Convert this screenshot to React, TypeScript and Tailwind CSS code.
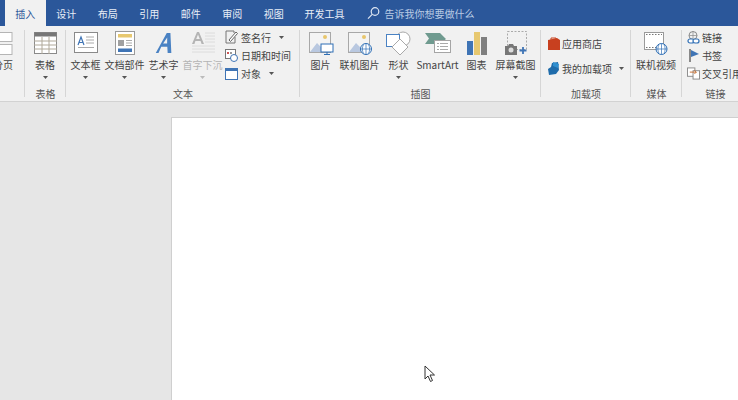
import React from "react";

const Caret = ({ c = "#555" }: { c?: string }) => (
  <svg width="5" height="3" viewBox="0 0 5 3" className="block"><path d="M0 0h5L2.5 3z" fill={c} /></svg>
);

const Big = ({ label, caret, children, dim, w = "w-[39px]" }: { label: string; caret?: boolean; children: React.ReactNode; dim?: boolean; w?: string }) => (
  <div className={`${w} shrink-0 flex flex-col items-center`}>
    <div className="h-[26px] flex items-center justify-center">{children}</div>
    <div className={`mt-[2px] h-[14px] leading-[14px] text-[10px] whitespace-nowrap ${dim ? "text-[#b4b4b4]" : "text-[#444]"}`}>{label}</div>
    {caret && <div className="mt-[4px]"><Caret c={dim ? "#bbb" : "#555"} /></div>}
  </div>
);

const Small = ({ label, icon, caret, h = "h-[19px]", gap = "gap-[2px]" }: { label: string; icon: React.ReactNode; caret?: string; h?: string; gap?: string }) => (
  <div className={`${h} flex items-center ${gap} whitespace-nowrap text-[10px] text-[#444]`}>
    <span className="w-[13px] h-[14px] flex items-center justify-center shrink-0">{icon}</span>
    <span>{label}</span>
    {caret && <span className={caret}><Caret /></span>}
  </div>
);

const Group = ({ label, w, children, last, right }: { label: string; w: string; children: React.ReactNode; last?: boolean; right?: boolean }) => (
  <div className={`${w} shrink-0 flex flex-col h-full relative overflow-hidden`}>
    <div className={`h-[57px] flex pt-[4px] ${right ? "justify-end" : ""}`}>{children}</div>
    <div className="mt-[4px] h-[14px] leading-[14px] text-center text-[10px] text-[#555]">{label}</div>
    {!last && <div className="absolute right-0 top-[4px] bottom-[4px] w-px bg-[#d6d6d6]" />}
  </div>
);

const Tab = ({ t, active, w = "w-[41.5px]" }: { t: string; active?: boolean; w?: string }) => (
  <div className={`${w} h-full shrink-0 flex items-center justify-center text-[10px] ${active ? "bg-[#f1f1f1] text-[#2b579a]" : "text-[#e8eef7]"}`}>{t}</div>
);

const Picture = ({ children }: { children?: React.ReactNode }) => (
  <svg width="26" height="25" viewBox="0 0 26 25">
    <rect x="1.5" y="1.5" width="21" height="20" fill="#f4f4f4" stroke="#a8a8a8" />
    <circle cx="17" cy="6" r="2" fill="#e8c66c" />
    <path d="M2 21l7-9 5 5 3-2 5 6z" fill="#b9c8e0" />
    {children}
  </svg>
);

export default function App() {
  return (
    <div className="w-[738px] h-[400px] overflow-hidden relative bg-[#e6e6e6] flex flex-col" style={{ fontFamily: '"Noto Sans CJK SC", "Noto Sans", sans-serif' }}>
      <div className="h-[26px] shrink-0 bg-[#2b579a] flex pl-[5px]">
        <Tab t="插入" active w="w-[40.5px]" /><Tab t="设计" /><Tab t="布局" /><Tab t="引用" /><Tab t="邮件" /><Tab t="审阅" /><Tab t="视图" /><Tab t="开发工具" w="w-[60px]" />
        <div className="ml-[12px] flex items-center gap-[5px]">
          <svg width="13" height="14" viewBox="0 0 13 14" fill="none" stroke="#dfe7f3" strokeWidth="1.2"><circle cx="8" cy="5.5" r="3.8" /><path d="M5.2 8.3L1 12.6" /></svg>
          <span className="text-[10px] text-[#b9cbe4]">告诉我你想要做什么</span>
        </div>
      </div>

      <div className="h-[76px] shrink-0 bg-[#f1f1f1] border-b border-[#d2d2d2] flex">
        <Group label="" w="w-[25px]" right>
          <div className="w-[25px] pr-[12px] flex flex-col items-end shrink-0">
            <svg width="13" height="26" viewBox="0 0 13 26" fill="none" className="shrink-0">
              <rect x="-3" y="2.5" width="15" height="9" fill="#fff" stroke="#b5b5b5" />
              <rect x="-3" y="14.5" width="15" height="10" fill="#fff" stroke="#b5b5b5" />
            </svg>
            <div className="mt-[2px] h-[14px] leading-[14px] text-[10px] text-[#444] whitespace-nowrap">分页</div>
          </div>
        </Group>

        <Group label="表格" w="w-[41px]">
          <Big label="表格" caret w="w-[40px]">
            <svg width="23" height="22" viewBox="0 0 23 22">
              <rect x="0.5" y="0.5" width="22" height="21" fill="#fff" stroke="#8a8a8a" />
              <rect x="0.5" y="0.5" width="22" height="4" fill="#777" />
              <path d="M0 9h23M0 13h23M0 17h23M8 5v17M15 5v17" stroke="#b0a99a" fill="none" />
            </svg>
          </Big>
        </Group>

        <Group label="文本" w="w-[234px]">
          <Big label="文本框" caret>
            <svg width="24" height="22" viewBox="0 0 24 22">
              <rect x="0.5" y="0.5" width="23" height="20" fill="#fff" stroke="#8a8a8a" />
              <path d="M4 13l3-8 3 8M5 10.5h4" stroke="#3f74b5" strokeWidth="1.2" fill="none" />
              <path d="M12 5h8M12 8h8M12 11h8M4 15.5h16" stroke="#aaa" fill="none" />
            </svg>
          </Big>
          <Big label="文档部件" caret>
            <svg width="20" height="24" viewBox="0 0 20 24">
              <rect x="0.5" y="0.5" width="19" height="23" fill="#fff" stroke="#9a9a9a" />
              <rect x="3" y="3" width="14" height="3.5" fill="#e7c870" />
              <rect x="3" y="9" width="6" height="6" fill="#a0a0a0" />
              <path d="M11 9.5h6M11 12h6M11 14.5h6" stroke="#aaa" fill="none" />
              <rect x="3" y="17.5" width="14" height="3.5" fill="#3f74b5" />
            </svg>
          </Big>
          <Big label="艺术字" caret>
            <svg width="20" height="22" viewBox="0 0 20 24"><path d="M1 23L13 1h4l1 22h-4l-.4-7H7l-3 7zM9 12.5h4.4L13.5 6z" fill="#4a82c3" fillRule="evenodd" /></svg>
          </Big>
          <Big label="首字下沉" caret dim>
            <svg width="24" height="24" viewBox="0 0 24 24">
              <path d="M1 13L6 1h2l5 12h-2.4l-1-3H4.4l-1 3zM5.2 8h3.6L7 3.5z" fill="#b4b4b4" fillRule="evenodd" />
              <path d="M14 2h10M14 5h10M14 8h10M14 11h10M1 15h23M1 18h23M1 21h23" stroke="#dcdcdc" fill="none" />
            </svg>
          </Big>
          <div className="ml-[3px] flex flex-col -mt-[2px]">
            <Small label="签名行" gap="gap-[3px]" caret="ml-[5px]" icon={
              <svg width="13" height="14" viewBox="0 0 13 14" fill="none"><path d="M1 1h8v2M1 1v12h9V7" stroke="#777" /><path d="M4 10l7-8 1.5 1.5-7 8z" fill="#fff" stroke="#666" /></svg>
            } />
            <Small label="日期和时间" gap="gap-[3px]" icon={
              <svg width="13" height="14" viewBox="0 0 13 14" fill="none"><rect x="0.5" y="1.5" width="10" height="9" fill="#fff" stroke="#777" /><rect x="2" y="4" width="2" height="2" fill="#c55" /><rect x="5" y="4" width="2" height="2" fill="#999" /><circle cx="9" cy="10" r="3.5" fill="#fff" stroke="#3f74b5" /></svg>
            } />
            <Small label="对象" gap="gap-[3px]" caret="ml-[5px]" icon={
              <svg width="13" height="12" viewBox="0 0 13 12" fill="none"><rect x="0.5" y="0.5" width="12" height="11" fill="#fff" stroke="#3f74b5" /><rect x="0.5" y="0.5" width="12" height="2.5" fill="#3f74b5" /></svg>
            } />
          </div>
        </Group>

        <Group label="插图" w="w-[241px]">
          <div className="w-px shrink-0" />
          <Big label="图片">
            <Picture><rect x="13" y="13" width="12" height="8" fill="#fff" stroke="#2f6fb5" /><path d="M16 23.5h6M19 21v2" stroke="#2f6fb5" /></Picture>
          </Big>
          <Big label="联机图片">
            <Picture><circle cx="19" cy="18" r="5.5" fill="#fff" stroke="#2f6fb5" /><path d="M13.5 18h11M19 12.5v11M16.5 13.5c-1.5 3-1.5 6 0 9M21.5 13.5c1.5 3 1.500 6 0 9" stroke="#2f6fb5" strokeWidth="0.7" fill="none" /></Picture>
          </Big>
          <Big label="形状" caret>
            <svg width="25" height="25" viewBox="0 0 25 25" fill="none">
              <circle cx="17" cy="8" r="7" fill="#fff" stroke="#a9a9a9" />
              <rect x="0.5" y="3.5" width="13" height="12" fill="#fff" stroke="#4a82c3" />
              <path d="M14 8l8 8-8 8-8-8z" fill="#fff" stroke="#a9a9a9" />
            </svg>
          </Big>
          <Big label="SmartArt">
            <svg width="26" height="22" viewBox="0 0 26 22">
              <path d="M0 1h15l6 6-6 5H0l4-5.500z" fill="#6f9a8f" />
              <rect x="9.500" y="8.500" width="16" height="12" fill="#fff" stroke="#a5a5a5" />
              <path d="M12 11.500h2M15 11.500h8M12 14.500h2M15 14.500h8M12 17.500h2M15 17.500h8" stroke="#aaa" />
            </svg>
          </Big>
          <Big label="图表">
            <svg width="20" height="23" viewBox="0 0 20 23"><rect x="0" y="9" width="6" height="14" fill="#3f74b5" /><rect x="7" y="0" width="6" height="23" fill="#e7c870" /><rect x="14" y="5" width="6" height="18" fill="#7f7f7f" /></svg>
          </Big>
          <Big label="屏幕截图" caret>
            <svg width="24" height="25" viewBox="0 0 24 25" fill="none">
              <rect x="3.500" y="0.500" width="19" height="18" stroke="#aaa" strokeDasharray="2 1.500" />
              <path d="M1 15h3l1-2h4l1 2h3v9H1z" fill="#777" />
              <circle cx="7" cy="19" r="2.500" fill="#ddd" />
              <path d="M19 16v7M15.500 19.500h7" stroke="#3f74b5" strokeWidth="1.800" />
            </svg>
          </Big>
        </Group>

        <Group label="加载项" w="w-[90px]">
          <div className="pl-[6px] pt-[1px] flex flex-col">
            <Small label="应用商店" h="h-[25px]" icon={
              <svg width="12" height="13" viewBox="0 0 12 13"><path d="M0 3l9-2 3 2v10H0z" fill="#c8401f" /><path d="M3 3V1h5v2" stroke="#c8401f" fill="none" /></svg>
            } />
            <Small label="我的加载项" h="h-[25px]" caret="ml-[5px]" icon={
              <svg width="13" height="13" viewBox="0 0 13 13"><path d="M5 1l6-1 1 8-3 4-7 1-1-6 3-2z" fill="#1f6cab" /><path d="M6 0l6 2-1 4-5-2z" fill="#2f8fd0" /></svg>
            } />
          </div>
        </Group>

        <Group label="媒体" w="w-[51px]">
          <Big label="联机视频" w="w-[50px]">
            <svg width="24" height="25" viewBox="0 0 24 25">
              <rect x="0.500" y="1.500" width="19" height="17" fill="#fff" stroke="#9a9a9a" />
              <path d="M2 3.500h16M2 16.500h16" stroke="#777" strokeDasharray="1.500 1.500" />
              <circle cx="17.500" cy="18" r="5.500" fill="#fff" stroke="#2f6fb5" />
              <path d="M12 18h11M17.500 12.500v11M15 13.500c-1.500 3-1.500 6 0 9M20 13.500c1.500 3 1.500 6 0 9" stroke="#2f6fb5" strokeWidth="0.700" fill="none" />
            </svg>
          </Big>
        </Group>

        <Group label="链接" w="w-[67px]" last>
          <div className="pl-[5px] flex flex-col -mt-[2px]">
            <Small label="链接" icon={
              <svg width="13" height="13" viewBox="0 0 13 13" fill="none"><circle cx="6" cy="4.500" r="4" stroke="#888" /><path d="M2 4.500h8M6 .5v8" stroke="#888" strokeWidth="0.700" /><rect x="1" y="8" width="6" height="4" rx="2" fill="#fff" stroke="#2f6fb5" strokeWidth="1.200" /><rect x="6" y="8" width="6" height="4" rx="2" fill="#fff" stroke="#2f6fb5" strokeWidth="1.200" /></svg>
            } />
            <Small label="书签" icon={
              <svg width="10" height="13" viewBox="0 0 10 13"><path d="M1 0v13" stroke="#666" strokeWidth="1.500" /><path d="M2 1l8 4-8 3z" fill="#3f74b5" /></svg>
            } />
            <Small label="交叉引用" icon={
              <svg width="14" height="13" viewBox="0 0 14 13" fill="none"><rect x="0.500" y="0.500" width="8" height="9" fill="#fff" stroke="#888" /><rect x="6.500" y="3.500" width="7" height="9" fill="#fff" stroke="#888" /><path d="M3 5h7M8 3l2 2-2 2" stroke="#c46a2b" /></svg>
            } />
          </div>
        </Group>
      </div>

      <div className="flex-1 min-h-0 pl-[171px] pt-[15px]">
        <div className="h-full bg-white border-l border-t border-[#cfcfcf]" />
      </div>

      <svg className="absolute left-[424px] top-[365px]" width="12" height="18" viewBox="0 0 12 18">
        <path d="M1 1v13l3-3 2.500 5.500 2-1L6 10h4.500z" fill="#fff" stroke="#333" strokeWidth="1" />
      </svg>
    </div>
  );
}
